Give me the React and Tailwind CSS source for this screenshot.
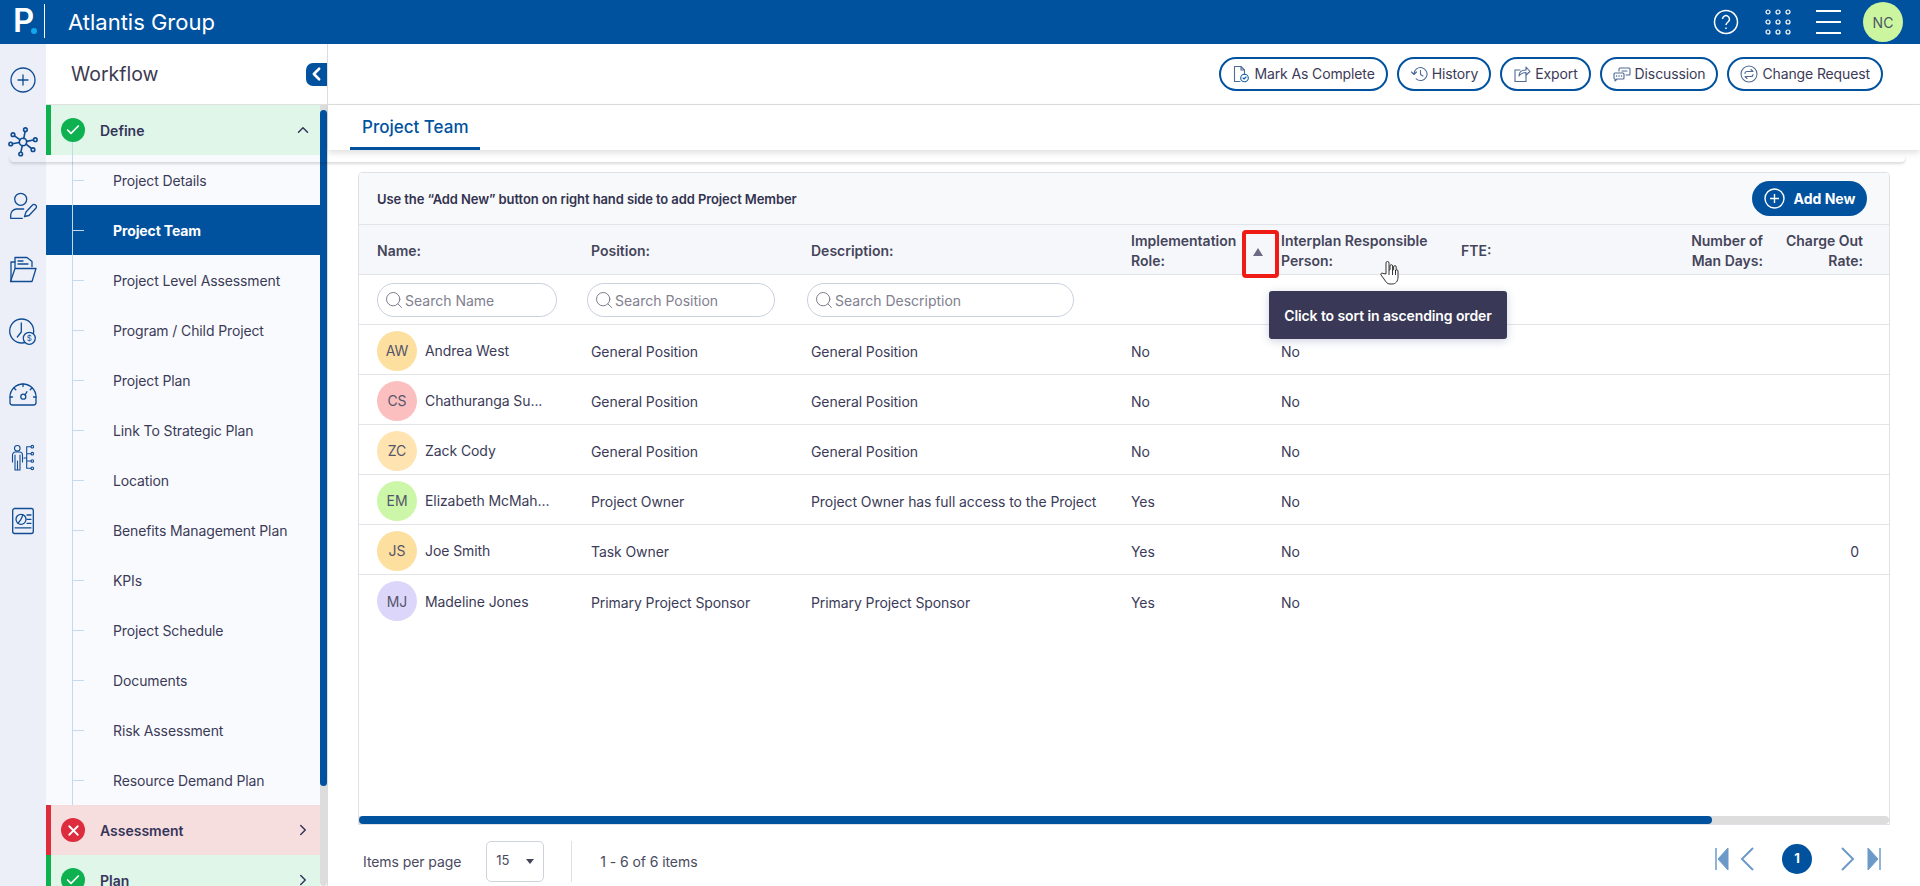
import React from 'react';
import { ChevronUp, ChevronRight, ChevronLeft, Search, Check, X } from 'lucide-react';

const subItems = [
    'Project Details', 'Project Team', 'Project Level Assessment', 'Program / Child Project', 'Project Plan',
    'Link To Strategic Plan', 'Location', 'Benefits Management Plan', 'KPIs', 'Project Schedule', 'Documents',
    'Risk Assessment', 'Resource Demand Plan',
];

const members = [
    { initials: 'AW', color: 'bg-[#fddfa0]', name: 'Andrea West', position: 'General Position', description: 'General Position', role: 'No' },
    { initials: 'CS', color: 'bg-[#fcbfc0]', name: 'Chathuranga Su...', position: 'General Position', description: 'General Position', role: 'No' },
    { initials: 'ZC', color: 'bg-[#ffe3b0]', name: 'Zack Cody', position: 'General Position', description: 'General Position', role: 'No' },
    { initials: 'EM', color: 'bg-[#cdf7a8]', name: 'Elizabeth McMah...', position: 'Project Owner', description: 'Project Owner has full access to the Project', role: 'Yes' },
    { initials: 'JS', color: 'bg-[#fddfa0]', name: 'Joe Smith', position: 'Task Owner', description: '', role: 'Yes', rate: '0' },
    { initials: 'MJ', color: 'bg-[#dcd6fa]', name: 'Madeline Jones', position: 'Primary Project Sponsor', description: 'Primary Project Sponsor', role: 'Yes' },
];

const gridCols = 'grid grid-cols-[214px_220px_320px_150px_180px_202px_100px_100px]';

function RailIcon({ children, weight = 1.3 }) {
    return (
        <svg width="30" height="30" viewBox="0 0 30 30" fill="none" stroke="#0f4c93" strokeWidth={weight} strokeLinecap="round" strokeLinejoin="round">
            {children}
        </svg>
    );
}

function Rail() {
    return (
        <div className="w-[46px] shrink-0 bg-[#eceff8] flex flex-col items-center">
            <div className="h-[21px]" />
            <RailIcon>
                <circle cx="15" cy="15" r="12" />
                <path d="M15 10v10M10 15h10" />
            </RailIcon>
            <div className="h-[32px]" />
            <RailIcon weight={1.6}>
                <circle cx="15" cy="15" r="3.700" />
                <circle cx="17.400" cy="2.700" r="1.800" />
                <circle cx="5" cy="7.700" r="1.800" />
                <circle cx="2.700" cy="17" r="1.800" />
                <circle cx="12.700" cy="27" r="1.800" />
                <circle cx="25" cy="22.700" r="1.800" />
                <circle cx="27.300" cy="12.700" r="1.800" />
                <path d="M15.800 11.400l1.300-6.900M12.100 12.900L6.500 8.800M11.400 15.500l-6.900 1.200M14.300 18.600l-1.400 6.600M18 17.200l5.500 4.300M18.600 14.400l6.900-1.400" />
            </RailIcon>
            <div className="h-[34px]" />
            <RailIcon>
                <circle cx="12.700" cy="8.300" r="6" />
                <path d="M14.300 27.300H2.700v-3.300a6 6 0 0 1 6-6h7" />
                <path d="M16.500 25.500l1.500-4.500 6.500-7a2 2 0 0 1 3 0 2 2 0 0 1 .5 3l-7 7.500z" />
            </RailIcon>
            <div className="h-[33px]" />
            <RailIcon>
                <path d="M7 14V3.500h12l5 4v5" />
                <path d="M10 7h5M10 10h10" />
                <path d="M7 8H3v19.500" />
                <path d="M2.500 27.500L7 14.500h21l-4 13z" />
            </RailIcon>
            <div className="h-[33px]" />
            <RailIcon>
                <circle cx="13.700" cy="14" r="12" />
                <path d="M13.300 6v9l-4 5" />
                <circle cx="21.300" cy="21.300" r="6" fill="#eceff8" />
                <text x="21.300" y="24.300" textAnchor="middle" fontSize="8" stroke="none" fill="#0f4c93" fontFamily="Inter, sans-serif">$</text>
            </RailIcon>
            <div className="h-[33px]" />
            <RailIcon>
                <path d="M4.500 25a2.500 2.500 0 0 1-2.500-2.500V17a13 13 0 0 1 26 0v5.500a2.500 2.500 0 0 1-2.500 2.500z" />
                <circle cx="15.300" cy="16.700" r="2.500" />
                <path d="M17 15l2-3.300M15 4v2.500M6 8l1.800 1.800M24 8l-1.800 1.800M2 17h2.500M28 17h-2.500" />
            </RailIcon>
            <div className="h-[33px]" />
            <RailIcon weight={1.1}>
                <circle cx="9.300" cy="5.300" r="2.800" />
                <path d="M4.500 19v-7a3 3 0 0 1 3-3h4a3 3 0 0 1 3 3v7M7 12v15h5V12M9.500 18v9" />
                <path d="M16 15h2.700M18.700 3.700v21.600M18.700 3.700h4M18.700 10.700h4M18.700 18h4M18.700 25.300h4" />
                <circle cx="24.300" cy="3.700" r="1.300" />
                <circle cx="24.300" cy="10.700" r="1.300" />
                <circle cx="24.300" cy="18" r="1.300" />
                <circle cx="24.300" cy="25.300" r="1.300" />
            </RailIcon>
            <div className="h-[33px]" />
            <RailIcon>
                <rect x="4.700" y="2.500" width="20.600" height="25" rx="2" />
                <circle cx="13" cy="13.300" r="5" />
                <path d="M13 13.300l2-4.500M13 13.300l-3 4M19 9h4M19 13.300h4M19 17.300h4M7 21.800h16" />
            </RailIcon>
        </div>
    );
}

function PhaseRow({ tone, label, open }) {
    const isGreen = tone === 'green';
    return (
        <div className={`relative h-[50px] shrink-0 flex items-center border-l-[5px] ${isGreen ? 'bg-[#dff6e9] border-[#0db14f]' : 'bg-[#f7dede] border-[#dc2c3e]'}`}>
            <span className={`ml-[10px] w-6 h-6 rounded-full flex items-center justify-center ${isGreen ? 'bg-[#0db14f]' : 'bg-[#dc2c3e]'}`}>
                {isGreen ? <Check size={16} color="white" strokeWidth={2.5} /> : <X size={17} color="white" strokeWidth={2.5} />}
            </span>
            <span className="ml-[15px] flex-1 text-[14px] font-semibold text-[#35355a]">{label}</span>
            {open ? <ChevronUp size={18} color="#35355a" className="mr-[8px]" /> : <ChevronRight size={18} color="#35355a" className="mr-[8px]" />}
            {open && <span className="absolute left-[21px] top-[37px] bottom-0 w-px bg-[#c5d9ee]" />}
        </div>
    );
}

function SubItem({ label }) {
    const active = label === 'Project Team';
    return (
        <div className={`h-[50px] shrink-0 flex items-center ${active ? 'bg-[#00529f] w-[281px] relative z-10' : 'bg-[#f9fafd]'}`}>
            <span className="ml-[26px] w-px self-stretch bg-[#c5d9ee]" />
            <span className="w-[11px] h-px bg-[#c5d9ee]" />
            <span className={`ml-[29px] text-[14px] tracking-[-0.12px] ${active ? 'font-bold text-white' : 'text-[#3b3b58]'}`}>{label}</span>
        </div>
    );
}

function Sidebar() {
    return (
        <div className="w-[282px] shrink-0 border-r border-[#dcdcdc] flex flex-col bg-white">
            <div className="h-[61px] shrink-0 flex items-center justify-between border-b border-[#e0e0e0]">
                <span className="ml-[25px] pt-[2px] text-[19.5px] text-[#3b3b4f]">Workflow</span>
                <span className="w-[21px] h-[23px] bg-[#00529f] rounded-l-[7px] flex items-center justify-center">
                    <ChevronLeft size={22} color="white" strokeWidth={3} />
                </span>
            </div>
            <div className="flex-1 flex min-h-0 overflow-hidden">
                <div className="w-[274px] shrink-0 flex flex-col">
                    <PhaseRow tone="green" label="Define" open />
                    {subItems.map((item) => <SubItem key={item} label={item} />)}
                    <PhaseRow tone="red" label="Assessment" />
                    <PhaseRow tone="green" label="Plan" />
                </div>
                <div className="w-[7px] bg-[#dddddd] rounded-b">
                    <div className="mt-[5px] h-[676px] bg-[#00529f] rounded-full" />
                </div>
            </div>
        </div>
    );
}

function ActionButton({ icon, label }) {
    return (
        <button className="h-[34px] px-[11px] rounded-full border-2 border-[#00529f] bg-white flex items-center gap-[4px] text-[14px] tracking-[-0.12px] text-[#3b3b58]">
            {icon}
            {label}
        </button>
    );
}

function SmallIcon({ children }) {
    return (
        <svg width="18" height="18" viewBox="0 0 18 18" fill="none" stroke="#4f6a96" strokeWidth="1.100" strokeLinecap="round" strokeLinejoin="round">
            {children}
        </svg>
    );
}

function ActionBar() {
    return (
        <div className="h-[61px] shrink-0 border-b border-[#dedede] flex items-center justify-end gap-[9px] pr-[37px] pb-[1px]">
            <ActionButton label="Mark As Complete" icon={(
                <SmallIcon>
                    <path d="M8 16.500H2.500V1.500h6.500l3.500 3.500v4M9 1.500V5h3.500" />
                    <circle cx="12.500" cy="13" r="3.800" stroke="#0f5fa8" />
                    <path d="M11 13l1 1 2-2" stroke="#0f5fa8" />
                </SmallIcon>
            )} />
            <ActionButton label="History" icon={(
                <SmallIcon>
                    <path d="M4 9a6.500 6.500 0 1 1 2.200 4.900M1.500 7L4 9.500 6.500 7" />
                    <path d="M10.500 5.500v4l2.500 1.500" />
                </SmallIcon>
            )} />
            <ActionButton label="Export" icon={(
                <SmallIcon>
                    <path d="M13 10v6.500H2V5h5" />
                    <path d="M6 11c0-4 3-6 7-6V2l4 4.500L13 10V7.500c-3 0-5 1-7 3.500z" />
                </SmallIcon>
            )} />
            <ActionButton label="Discussion" icon={(
                <SmallIcon>
                    <path d="M2 8h8a1 1 0 0 1 1 1v4a1 1 0 0 1-1 1H4l-2 2v-2a1 1 0 0 1-1-1V9a1 1 0 0 1 1-1z" />
                    <path d="M3.500 11h.1M6 11h.1M8.500 11h.1" strokeWidth="1.500" />
                    <path d="M6 6V4a1 1 0 0 1 1-1h9a1 1 0 0 1 1 1v5a1 1 0 0 1-1 1h-3M9 6h5" />
                </SmallIcon>
            )} />
            <ActionButton label="Change Request" icon={(
                <SmallIcon>
                    <circle cx="9" cy="9" r="8" />
                    <path d="M5 8.500a2 2 0 0 1 2-2h6l-2-2M13 9.500a2 2 0 0 1-2 2H5l2 2" />
                </SmallIcon>
            )} />
        </div>
    );
}

function SearchBox({ placeholder, className }) {
    return (
        <div className={`h-[34px] rounded-full border border-[#c9d0de] bg-white flex items-center pl-[6px] gap-[1px] ${className}`}>
            <Search size={20} color="#7d7d90" strokeWidth={1.200} className="shrink-0" />
            <input placeholder={placeholder} className="w-full min-w-0 outline-none text-[14px] text-[#3b3b58] placeholder:text-[#80808f]" />
        </div>
    );
}

function SortedHeader() {
    return (
        <div className={`${gridCols} h-[50px] bg-[#f6f7fa] border-b border-[#e2e4e8] pl-[18px] pt-[2px] items-center text-[14px] font-semibold leading-[20px] text-[#45455a]`}>
            <span>Name:</span>
            <span>Position:</span>
            <span>Description:</span>
            <span>Implementation<br />Role:</span>
            <span>Interplan Responsible<br />Person:</span>
            <span>FTE:</span>
            <span className="text-right">Number of<br />Man Days:</span>
            <span className="text-right">Charge Out<br />Rate:</span>
        </div>
    );
}

function FilterRow() {
    return (
        <div className={`${gridCols} h-[50px] border-b border-[#e2e4e8] pl-[18px] pt-[1px] items-center`}>
            <SearchBox placeholder="Search Name" className="w-[180px]" />
            <SearchBox placeholder="Search Position" className="w-[188px] -ml-1" />
            <SearchBox placeholder="Search Description" className="w-[267px] -ml-1" />
        </div>
    );
}

function MemberRow({ member }) {
    return (
        <div className={`${gridCols} h-[50px] shrink-0 border-b last:border-b-0 border-[#e2e4e8] pl-[18px] items-center text-[14px] tracking-[-0.08px] text-[#3b3b58]`}>
            <div className="flex items-center gap-[8px] mt-[2px]">
                <span className={`w-10 h-10 rounded-full flex items-center justify-center text-[#55556a] ${member.color}`}>{member.initials}</span>
                <span>{member.name}</span>
            </div>
            <span className="mt-[4px]">{member.position}</span>
            <span className="mt-[4px]">{member.description}</span>
            <span className="mt-[4px]">{member.role}</span>
            <span className="mt-[4px]">No</span>
            <span />
            <span />
            <span className="mt-[4px] text-right pr-[4px]">{member.rate}</span>
        </div>
    );
}

function Pagination() {
    return (
        <div className="flex items-center mr-[9px] pt-[6px]">
            <svg width="14" height="24" viewBox="0 0 14 24" fill="#6c9ac8" stroke="#6c9ac8">
                <path d="M1 1v22" strokeWidth="1.500" />
                <path d="M13 1v22L3 12z" />
            </svg>
            <svg width="14" height="24" viewBox="0 0 14 24" fill="none" stroke="#6c9ac8" strokeWidth="2" className="ml-[11px]">
                <path d="M13 1L2 12l11 11" />
            </svg>
            <span className="ml-[28px] w-[30px] h-[30px] rounded-full bg-[#00529f] text-white text-[13px] font-bold flex items-center justify-center">1</span>
            <svg width="14" height="24" viewBox="0 0 14 24" fill="none" stroke="#6c9ac8" strokeWidth="2" className="ml-[29px]">
                <path d="M1 1l11 11L1 23" />
            </svg>
            <svg width="14" height="24" viewBox="0 0 14 24" fill="#6c9ac8" stroke="#6c9ac8" className="ml-[12px]">
                <path d="M1 1v22l10-11z" />
                <path d="M13 1v22" strokeWidth="1.500" />
            </svg>
        </div>
    );
}

function TeamCard() {
    return (
        <div className="relative mx-[30px] mt-[22px] mr-[30px] flex-1 min-h-0 flex flex-col">
            <div className="flex-1 min-h-0 border border-[#dfe1e6] rounded-t-[4px] flex flex-col overflow-hidden">
                <div className="h-[52px] shrink-0 bg-[#f8f9fb] border-b border-[#e2e4e8] flex items-center justify-between pl-[18px] pr-[22px]">
                    <span className="pt-[2px] text-[13px] font-semibold tracking-[-0.1px] text-[#33334f]">Use the “Add New” button on right hand side to add Project Member</span>
                    <button className="h-[35px] w-[115px] rounded-full bg-[#00529f] text-white text-[14px] font-bold flex items-center justify-center gap-[9px]">
                        <svg width="21" height="21" viewBox="0 0 21 21" fill="none" stroke="white" strokeWidth="1.400">
                            <circle cx="10.500" cy="10.500" r="9.500" />
                            <path d="M10.500 6v9M6 10.500h9" />
                        </svg>
                        Add New
                    </button>
                </div>
                <SortedHeader />
                <FilterRow />
                <div className="flex-1 min-h-0">
                    {members.map((m) => <MemberRow key={m.initials} member={m} />)}
                </div>
                <div className="h-[8px] shrink-0 bg-[#dddddd] rounded-r">
                    <div className="w-[1353px] h-full bg-[#00529f] rounded-full" />
                </div>
            </div>
            <div className="h-[61px] shrink-0 flex items-center justify-between">
                <div className="flex items-center pt-[11px] text-[14px] tracking-[-0.08px] text-[#4a4a60]">
                    <span className="ml-[5px]">Items per page</span>
                    <div className="ml-[25px] w-[58px] h-[41px] border border-[#ced2da] rounded-[5px] flex items-center justify-between px-[9px] text-[13px]">
                        15
                        <span className="w-0 h-0 border-l-[4px] border-r-[4px] border-t-[5px] border-l-transparent border-r-transparent border-t-[#44445a]" />
                    </div>
                    <span className="ml-[27px] w-px h-[41px] bg-[#dfe1e6]" />
                    <span className="ml-[28px]">1 - 6 of 6 items</span>
                </div>
                <Pagination />
            </div>

            {/* sort control callout */}
            <div className="absolute left-[884px] top-[58px] w-[37px] h-[48px] border-[4px] border-[#ee1c14] rounded-[4px] flex items-center justify-center pr-[5px] pb-[5px]">
                <span className="w-0 h-0 border-l-[5px] border-r-[5px] border-b-[8px] border-l-transparent border-r-transparent border-b-[#6b6b85]" />
            </div>
            <div className="absolute left-[911px] top-[119px] w-[238px] h-[48px] rounded-[3px] bg-[#393856] shadow-[0_2px_8px_rgba(60,80,130,0.25)] flex items-center justify-center text-[14px] tracking-[-0.1px] font-semibold text-white">
                Click to sort in ascending order
            </div>
            <svg className="absolute left-[1022px] top-[88px]" width="20" height="26" viewBox="0 0 20 26" fill="white" stroke="#333" strokeWidth="1" strokeLinejoin="round">
                <path d="M6 14V3a1.500 1.500 0 0 1 3 0v7l1-.2V6a1.300 1.300 0 0 1 2.600 0v4l1-.1V7a1.300 1.300 0 0 1 2.600 0v3a1.300 1.300 0 0 1 1.800 1v6c0 4-2 7-6 7H10c-3 0-4-2-6-5l-3-4c-.7-1.500 1-2.500 2-1.500z" />
                <path d="M9 10v5M12.500 10v5M15.500 10v5" fill="none" />
            </svg>
        </div>
    );
}

function App() {
    return (
        <div className="relative h-screen flex flex-col overflow-hidden bg-white font-['Inter',sans-serif]">
            {/* Top bar */}
            <div className="h-[44px] shrink-0 bg-[#00529f] flex items-center text-white">
                <div className="w-[45px] h-[34px] -mt-[2px] border-r border-white flex items-end relative">
                    <span className="ml-[13px] text-[33px] leading-[35px] font-semibold">P</span>
                    <span className="absolute left-[31px] bottom-[4px] w-[6px] h-[6px] rounded-full bg-[#12a8f0]" />
                </div>
                <span className="ml-[23px] text-[22px] font-normal">Atlantis Group</span>
                <div className="ml-auto flex items-center">
                    <svg width="26" height="26" viewBox="0 0 26 26" fill="none" stroke="white" strokeWidth="1.500">
                        <circle cx="13" cy="13" r="11.500" />
                        <path d="M9.500 10a3.500 3.500 0 1 1 5.500 3c-1.500 1-2 1.500-2 3M13 18.500v1.500" />
                    </svg>
                    <svg width="26" height="26" viewBox="0 0 26 26" fill="none" stroke="white" strokeWidth="1.200" className="ml-[26px]">
                        {[3, 13, 23].map((y) => [3, 13, 23].map((x) => <circle key={`${x}-${y}`} cx={x} cy={y} r="2" />))}
                    </svg>
                    <div className="ml-[25px] w-[25px] flex flex-col gap-[9px]">
                        <span className="h-[2px] bg-white" />
                        <span className="h-[2px] bg-white" />
                        <span className="h-[2px] bg-white" />
                    </div>
                    <span className="ml-[22px] mr-[17px] w-10 h-10 rounded-full bg-[#ccf5a0] text-[#4b5563] text-[14px] flex items-center justify-center">NC</span>
                </div>
            </div>

            <div className="flex-1 flex min-h-0">
                <Rail />
                <Sidebar />
                <div className="flex-1 min-w-0 flex flex-col">
                    <ActionBar />
                    <div className="h-[45px] shrink-0 bg-white shadow-[0_3px_6px_rgba(0,0,0,0.12)] relative z-10 pl-[22px] flex items-end">
                        <div className="w-[130px] h-full border-b-[3px] border-[#00529f] flex items-center pl-[12px] pt-[4px] text-[17px] font-medium text-[#00529f]">
                            Project Team
                        </div>
                    </div>
                    <TeamCard />
                </div>
            </div>

            {/* page-wide shadow strip under the define row */}
            <div className="absolute left-[10px] right-[15px] top-[155px] h-[7px] shadow-[0_2px_3px_rgba(0,0,0,0.14)] rounded-b pointer-events-none z-20" />
        </div>
    );
}

export default App;
